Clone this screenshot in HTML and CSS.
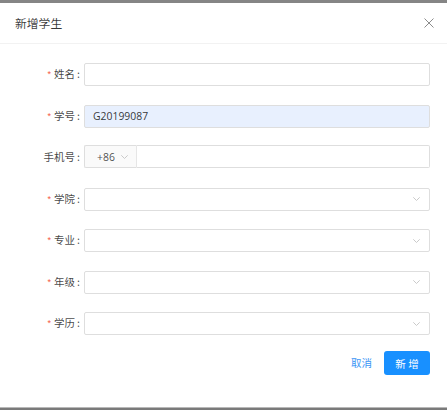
FILE: index.html
```html
<!DOCTYPE html>
<html lang="zh-CN">
<head>
<meta charset="utf-8">
<title>新增学生</title>
<link rel="stylesheet" href="styles.css">
</head>
<body>
<div class="page">
  <div class="mask-top"></div>
  <div class="modal">
    <div class="modal-header">
      <span class="modal-title">新增学生</span>
      <button class="modal-close" type="button" aria-label="关闭">
        <svg width="10" height="10" viewBox="0 0 10 10"><path d="M0.5 0.5 L9.5 9.5 M9.5 0.5 L0.5 9.5" stroke="#8c8c8c" stroke-width="1" fill="none"/></svg>
      </button>
    </div>
    <div class="modal-body">
      <form class="form">
        <div class="form-row">
          <label class="form-label"><span class="req">*</span>姓名<span class="colon">:</span></label>
          <div class="form-control"><input class="input" type="text"></div>
        </div>
        <div class="form-row">
          <label class="form-label"><span class="req">*</span>学号<span class="colon">:</span></label>
          <div class="form-control"><input class="input input-filled" type="text" value="G20199087"></div>
        </div>
        <div class="form-row">
          <label class="form-label">手机号<span class="colon">:</span></label>
          <div class="form-control group">
            <div class="addon"><span>+86</span><svg class="chev chev-small" width="7" height="4" viewBox="0 0 7 4"><path d="M0.3 0.3 L3.5 3.5 L6.7 0.3" stroke="#c4c4c4" stroke-width="0.9" fill="none"/></svg></div>
            <input class="input group-input" type="text">
          </div>
        </div>
        <div class="form-row">
          <label class="form-label"><span class="req">*</span>学院<span class="colon">:</span></label>
          <div class="form-control"><div class="select"><svg class="chev" width="7" height="4" viewBox="0 0 7 4"><path d="M0.3 0.3 L3.5 3.5 L6.7 0.3" stroke="#c4c4c4" stroke-width="0.9" fill="none"/></svg></div></div>
        </div>
        <div class="form-row">
          <label class="form-label"><span class="req">*</span>专业<span class="colon">:</span></label>
          <div class="form-control"><div class="select"><svg class="chev" width="7" height="4" viewBox="0 0 7 4"><path d="M0.3 0.3 L3.5 3.5 L6.7 0.3" stroke="#c4c4c4" stroke-width="0.9" fill="none"/></svg></div></div>
        </div>
        <div class="form-row">
          <label class="form-label"><span class="req">*</span>年级<span class="colon">:</span></label>
          <div class="form-control"><div class="select"><svg class="chev" width="7" height="4" viewBox="0 0 7 4"><path d="M0.3 0.3 L3.5 3.5 L6.7 0.3" stroke="#c4c4c4" stroke-width="0.9" fill="none"/></svg></div></div>
        </div>
        <div class="form-row">
          <label class="form-label"><span class="req">*</span>学历<span class="colon">:</span></label>
          <div class="form-control"><div class="select"><svg class="chev" width="7" height="4" viewBox="0 0 7 4"><path d="M0.3 0.3 L3.5 3.5 L6.7 0.3" stroke="#c4c4c4" stroke-width="0.9" fill="none"/></svg></div></div>
        </div>
      </form>
      <div class="form-footer">
        <button class="btn-link" type="button">取消</button>
        <button class="btn-primary" type="button">新 增</button>
      </div>
    </div>
  </div>
  <div class="mask-bottom"></div>
</div>
</body>
</html>
```

FILE: styles.css
```css
* { box-sizing: border-box; }
html, body { margin: 0; padding: 0; }
body {
  font-family: "Noto Sans", "Noto Sans CJK SC", sans-serif;
  background: #ffffff;
  color: rgba(0, 0, 0, 0.78);
}
.page {
  width: 447px;
  height: 410px;
  display: flex;
  flex-direction: column;
  overflow: hidden;
}
.mask-top {
  height: 3px;
  background: #858585;
  flex: none;
}
.mask-bottom {
  height: 3px;
  background: #7a7a7a;
  border-top: 1px solid #b8b8b8;
  flex: none;
}
.modal {
  flex: 1;
  background: #fff;
  display: flex;
  flex-direction: column;
}
.modal-header {
  height: 41px;
  border-bottom: 1px solid #f2f2f2;
  display: flex;
  align-items: center;
  justify-content: space-between;
  padding: 0 15px 0 15px;
}
.modal-title {
  font-size: 11.8px;
  line-height: 16px;
  color: rgba(0, 0, 0, 0.78);
  font-family: "Noto Sans CJK SC", sans-serif;
}
.modal-close {
  border: 0;
  background: transparent;
  padding: 0;
  margin-right: -2px;
  width: 10px;
  height: 10px;
  display: flex;
}
.modal-body {
  padding: 18px 17px 0 0;
}
.form {
  display: flex;
  flex-direction: column;
  gap: 18.5px;
}
.form-row {
  display: grid;
  grid-template-columns: 84px 1fr;
  align-items: center;
  height: 23px;
}
.form-label {
  text-align: right;
  padding-right: 4px;
  font-size: 10.5px;
  line-height: 23px;
  font-family: "Noto Sans CJK SC", sans-serif;
  color: rgba(0, 0, 0, 0.75);
  white-space: nowrap;
}
.req {
  color: #f5563f;
  font-family: "Liberation Sans", sans-serif;
  font-size: 9px;
  margin-right: 3px;
  position: relative;
  top: -1px;
}
.colon {
  margin-left: 2px;
}
.form-control {
  height: 23px;
}
.input {
  display: block;
  width: 100%;
  height: 23px;
  border: 1px solid #dedede;
  border-radius: 2px;
  padding: 0 8px;
  font-family: "Open Sans", "Noto Sans", sans-serif;
  font-size: 10.4px;
  color: rgba(0, 0, 0, 0.8);
  background: #fff;
  outline: none;
}
.input-filled {
  background: #e8f0fe;
}
.group {
  display: flex;
}
.addon {
  flex: none;
  width: 53px;
  height: 23px;
  display: flex;
  align-items: center;
  padding-left: 12px;
  gap: 6px;
  background: #fafafa;
  border: 1px solid #dedede;
  border-right: 1px solid #e6e6e6;
  border-radius: 2px 0 0 2px;
  font-family: "Open Sans", "Noto Sans", sans-serif;
  font-size: 10.4px;
  color: rgba(0, 0, 0, 0.72);
}
.group-input {
  flex: 1;
  border-left: 0;
  border-radius: 0 2px 2px 0;
}
.select {
  height: 23px;
  border: 1px solid #dedede;
  border-radius: 2px;
  display: flex;
  align-items: center;
  justify-content: flex-end;
  padding-right: 9px;
}
.chev { display: block; }
.form-footer {
  margin-top: 17px;
  display: flex;
  justify-content: flex-end;
  align-items: center;
  gap: 12px;
}
.btn-link {
  border: 0;
  background: transparent;
  padding: 0;
  font-family: "Noto Sans CJK SC", sans-serif;
  font-size: 10.5px;
  color: #3a95f5;
  line-height: 24px;
}
.btn-primary {
  width: 46px;
  height: 24px;
  border: 0;
  border-radius: 3px;
  background: #1890ff;
  color: #fff;
  font-family: "Noto Sans CJK SC", sans-serif;
  font-size: 10.5px;
  padding: 0;
  letter-spacing: 0;
}
```
